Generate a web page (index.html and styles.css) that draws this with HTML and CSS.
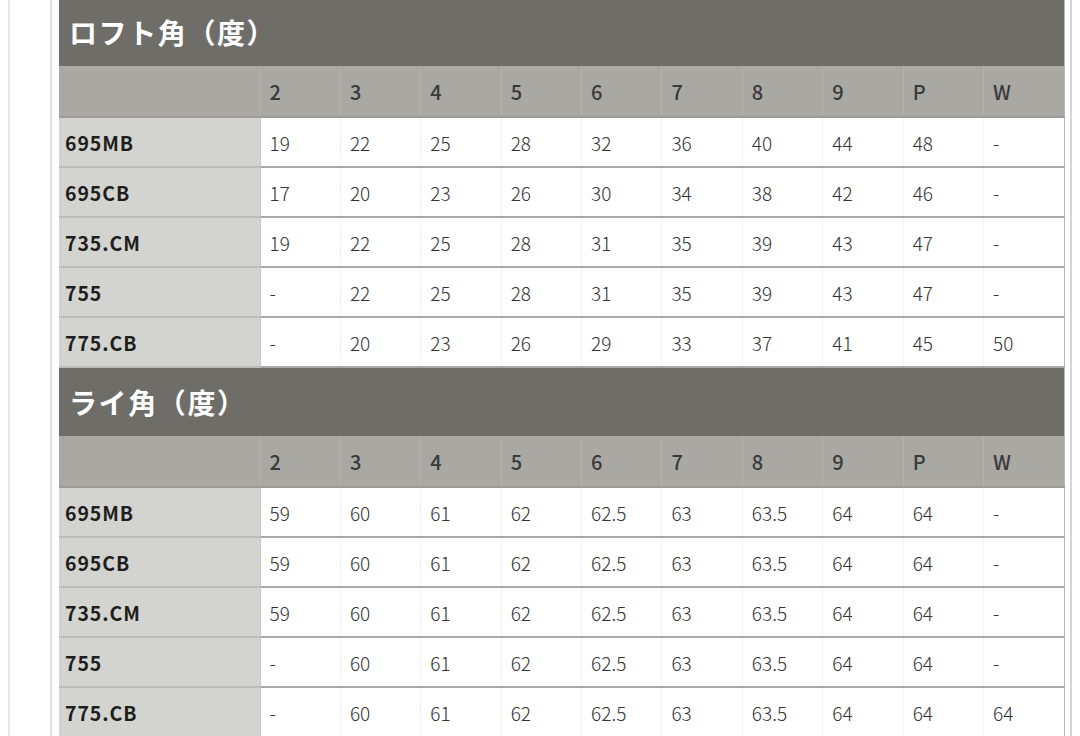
FILE: index.html
```html
<!DOCTYPE html>
<html lang="ja">
<head>
<meta charset="utf-8">
<title>ロフト角・ライ角</title>
<link rel="stylesheet" href="styles.css">
</head>
<body>
<div class="outer">
  <div class="inner">
    <table class="spec">
      <colgroup>
        <col class="c-name">
        <col span="10" class="c-val">
      </colgroup>
      <tbody>
        <tr class="title"><th colspan="11">ロフト角（度）</th></tr>
        <tr class="head"><th class="blank"></th><th>2</th><th>3</th><th>4</th><th>5</th><th>6</th><th>7</th><th>8</th><th>9</th><th>P</th><th>W</th></tr>
        <tr><th class="name">695MB</th><td>19</td><td>22</td><td>25</td><td>28</td><td>32</td><td>36</td><td>40</td><td>44</td><td>48</td><td>-</td></tr>
        <tr><th class="name">695CB</th><td>17</td><td>20</td><td>23</td><td>26</td><td>30</td><td>34</td><td>38</td><td>42</td><td>46</td><td>-</td></tr>
        <tr><th class="name">735.CM</th><td>19</td><td>22</td><td>25</td><td>28</td><td>31</td><td>35</td><td>39</td><td>43</td><td>47</td><td>-</td></tr>
        <tr><th class="name">755</th><td>-</td><td>22</td><td>25</td><td>28</td><td>31</td><td>35</td><td>39</td><td>43</td><td>47</td><td>-</td></tr>
        <tr><th class="name">775.CB</th><td>-</td><td>20</td><td>23</td><td>26</td><td>29</td><td>33</td><td>37</td><td>41</td><td>45</td><td>50</td></tr>
        <tr class="title"><th colspan="11">ライ角（度）</th></tr>
        <tr class="head"><th class="blank"></th><th>2</th><th>3</th><th>4</th><th>5</th><th>6</th><th>7</th><th>8</th><th>9</th><th>P</th><th>W</th></tr>
        <tr><th class="name">695MB</th><td>59</td><td>60</td><td>61</td><td>62</td><td>62.5</td><td>63</td><td>63.5</td><td>64</td><td>64</td><td>-</td></tr>
        <tr><th class="name">695CB</th><td>59</td><td>60</td><td>61</td><td>62</td><td>62.5</td><td>63</td><td>63.5</td><td>64</td><td>64</td><td>-</td></tr>
        <tr><th class="name">735.CM</th><td>59</td><td>60</td><td>61</td><td>62</td><td>62.5</td><td>63</td><td>63.5</td><td>64</td><td>64</td><td>-</td></tr>
        <tr><th class="name">755</th><td>-</td><td>60</td><td>61</td><td>62</td><td>62.5</td><td>63</td><td>63.5</td><td>64</td><td>64</td><td>-</td></tr>
        <tr><th class="name">775.CB</th><td>-</td><td>60</td><td>61</td><td>62</td><td>62.5</td><td>63</td><td>63.5</td><td>64</td><td>64</td><td>64</td></tr>
      </tbody>
    </table>
  </div>
</div>
</body>
</html>
```

FILE: styles.css
```css
html, body {
  margin: 0;
  padding: 0;
  background: #ffffff;
}

body {
  font-family: "Noto Sans CJK JP", "Noto Sans", sans-serif;
  color: #333333;
  overflow: hidden;
}

.outer {
  margin-left: 8px;
  border-left: 2px solid #e6e6e6;
  padding-left: 40px;
}

.inner {
  width: 1005px;
  border-left: 2px solid #e0e0e0;
  border-right: 2px solid #d6d6d6;
  padding: 0 6px 0 7px;
}

.spec {
  width: 1005px;
  margin-top: -2px;
  border-collapse: collapse;
  table-layout: fixed;
  border-right: 1px solid #b9b9b9;
}

.c-name {
  width: 201px;
}

.c-val {
  width: 80.4px;
}

.spec th,
.spec td {
  padding: 0;
  text-align: left;
  vertical-align: middle;
}

.title th {
  height: 68px;
  background: #6f6d68;
  color: #ffffff;
  font-size: 28px;
  font-weight: 700;
  padding-left: 10px;
  letter-spacing: 1.6px;
  line-height: 1;
}

.head th {
  height: 50px;
  background: #a9a8a3;
  color: #3a3a3a;
  font-size: 20px;
  font-weight: 500;
  padding-left: 9px;
  border-left: 1px solid #b4b3ae;
  border-bottom: 2px solid #9d9c98;
}

.head th.blank {
  border-left: none;
}

.spec td {
  height: 48px;
  background: #ffffff;
  font-size: 19px;
  font-weight: 300;
  color: #333333;
  padding-left: 9px;
  border-left: 1px solid #f3f3f3;
  border-bottom: 2px solid #a9a9a9;
}

.spec th.name {
  height: 48px;
  background: #d3d4cf;
  color: #1e1e1e;
  font-size: 19.5px;
  font-weight: 700;
  letter-spacing: 0.9px;
  padding-left: 6px;
  border-bottom: 2px solid #bdbeb9;
  border-right: 1px solid #c8c9c4;
}
```
